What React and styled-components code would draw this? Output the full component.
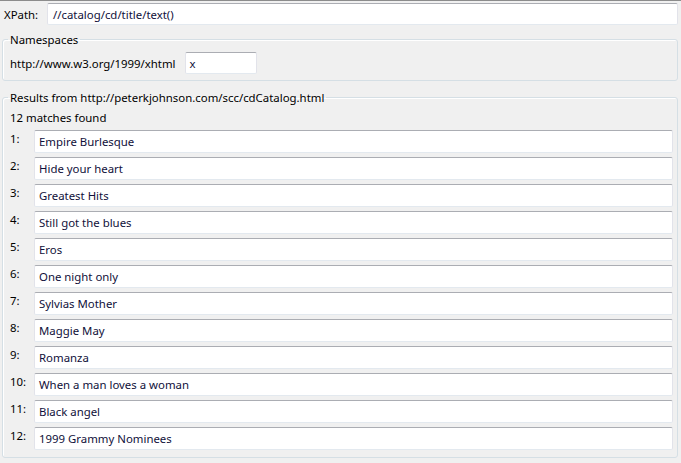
import React from "react";
import styled, { createGlobalStyle } from "styled-components";

const GlobalStyle = createGlobalStyle`
  html, body {
    margin: 0;
    padding: 0;
    background: #f0f0f0;
  }
  body {
    font-family: "Noto Sans", "Open Sans", sans-serif;
    font-size: 11.4px;
    color: #000;
  }
`;

const Window = styled.div`
  width: 681px;
  height: 463px;
  box-sizing: border-box;
  border-top: 1px solid #8c8c8c;
  padding: 2px 3px 0 2px;
  background: #f0f0f0;
  overflow: hidden;
`;

const XPathRow = styled.div`
  display: flex;
  align-items: center;
  height: 22px;
`;

const Label = styled.span`
  width: ${props => props.width || "auto"};
  flex: none;
  padding-left: ${props => props.indent || "0"};
  line-height: 15px;
  white-space: nowrap;
`;

const Field = styled.div`
  box-sizing: border-box;
  height: ${props => props.height || "22px"};
  width: ${props => props.width || "auto"};
  flex: ${props => (props.width ? "none" : "1")};
  background: #fff;
  border: 1px solid #e2e3ea;
  border-top-color: #abadb3;
  border-bottom-color: #e3e9ef;
  border-radius: 2px;
  padding: 0 ${props => props.inset || "4px"};
  display: flex;
  align-items: center;
  white-space: nowrap;
  color: #10103a;
`;

const Group = styled.fieldset`
  margin: ${props => props.top || "0"} 0 0 0;
  padding: ${props => props.pad || "5px 4px 6px 7px"};
  border: 1px solid #d5dfe5;
  border-radius: 3px;
  box-shadow: inset 1px 1px 0 #fff;
  box-sizing: border-box;
`;

const Legend = styled.legend`
  padding: 0 2px;
  margin-left: -2px;
  line-height: 15px;
`;

const NsRow = styled.div`
  display: flex;
  align-items: center;
  gap: 9px;
`;

const Status = styled.div`
  line-height: 15px;
  margin: 0 0 5px 0;
`;

const ResultList = styled.div`
  display: flex;
  flex-direction: column;
  gap: 4px;
`;

const ResultRow = styled.div`
  display: flex;
  align-items: flex-start;
`;

const RowNum = styled.span`
  width: 24px;
  flex: none;
  line-height: 15px;
  padding-top: 1px;
`;

const titles = [
  "Empire Burlesque",
  "Hide your heart",
  "Greatest Hits",
  "Still got the blues",
  "Eros",
  "One night only",
  "Sylvias Mother",
  "Maggie May",
  "Romanza",
  "When a man loves a woman",
  "Black angel",
  "1999 Grammy Nominees"
];

export default function App() {
  return (
    <Window>
      <GlobalStyle />
      <XPathRow>
        <Label width="43px" indent="2px">XPath:</Label>
        <Field inset="5px">//catalog/cd/title/text()</Field>
      </XPathRow>
      <Group top="7px" pad="5px 5px 6px 7px">
        <Legend>Namespaces</Legend>
        <NsRow>
          <Label>http://www.w3.org/1999/xhtml</Label>
          <Field width="72px">x</Field>
        </NsRow>
      </Group>
      <Group top="9px" pad="5px 4px 7px 7px">
        <Legend>Results from http://peterkjohnson.com/scc/cdCatalog.html</Legend>
        <Status>12 matches found</Status>
        <ResultList>
          {titles.map((title, i) => (
            <ResultRow key={i}>
              <RowNum>{i + 1}:</RowNum>
              <Field height="23px">{title}</Field>
            </ResultRow>
          ))}
        </ResultList>
      </Group>
    </Window>
  );
}
